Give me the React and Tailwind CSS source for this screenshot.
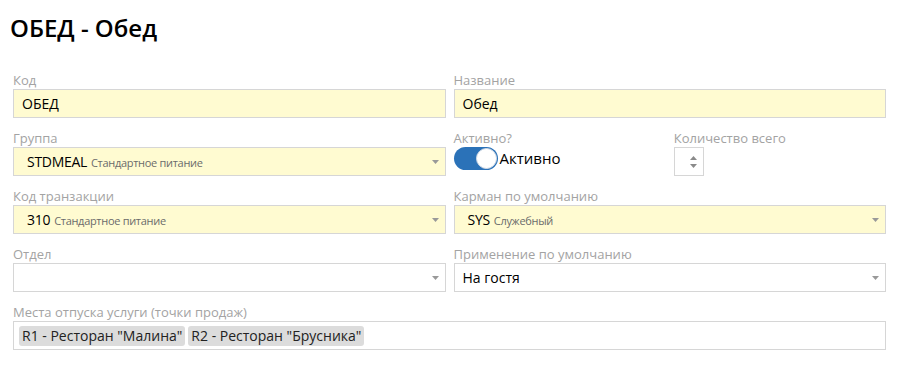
import React from "react";

const Caret = () => (
  <svg width="7" height="4" viewBox="0 0 7 4" className="shrink-0">
    <path d="M0 0 L7 0 L3.5 4 Z" fill="#999999" />
  </svg>
);

const Label = ({ children }) => (
  <div className="h-[18px] text-[13px] leading-[18px] text-[#a3a3a3] whitespace-nowrap">{children}</div>
);

const TextInput = ({ value, yellow }) => (
  <div
    className={`h-[29px] border border-[#d6d6d6] flex items-center px-[8px] text-[14px] text-black ${
      yellow ? "bg-[#fffbd1]" : "bg-white"
    }`}
  >
    {value}
  </div>
);

const Select = ({ code, name, plain, yellow }) => (
  <div
    className={`h-[29px] border border-[#d6d6d6] flex items-center justify-between pr-[6px] ${
      yellow ? "bg-[#fffbd1]" : "bg-white"
    } ${code ? "pl-[13px]" : "pl-[8px]"}`}
  >
    <div className="flex items-baseline gap-[4px] whitespace-nowrap">
      {code && <span className="text-[14px] tracking-[-0.3px] text-black">{code}</span>}
      {name && <span className="text-[11px] text-[#6b6b6b] tracking-[-0.3px]">{name}</span>}
      {plain && <span className="text-[14px] text-black">{plain}</span>}
    </div>
    <Caret />
  </div>
);

const Field = ({ label, children }) => (
  <div className="flex flex-col">
    <Label>{label}</Label>
    {children}
  </div>
);

const Tag = ({ children }) => (
  <span className="h-[20px] px-[3px] rounded-[3px] bg-[#dcdcdc] text-[14px] leading-[20px] text-[#222] whitespace-nowrap">
    {children}
  </span>
);

export default function App() {
  return (
    <div
      className="w-[902px] h-[365px] bg-white overflow-hidden"
      style={{ fontFamily: '"Open Sans", "Noto Sans", sans-serif' }}
    >
      <h1 className="pl-[10px] pt-[12px] h-[71px] text-[24px] leading-[32px] font-semibold text-black">
        ОБЕД - Обед
      </h1>

      <div className="pl-[13px] pr-[16px] flex flex-col gap-[11px]">
        <div className="grid grid-cols-2 gap-x-[8px]">
          <Field label="Код">
            <TextInput value="ОБЕД" yellow />
          </Field>
          <Field label="Название">
            <TextInput value="Обед" yellow />
          </Field>
        </div>

        <div className="grid grid-cols-2 gap-x-[8px]">
          <Field label="Группа">
            <Select code="STDMEAL" name="Стандартное питание" yellow />
          </Field>
          <div className="grid grid-cols-2 gap-x-[8px]">
            <Field label="Активно?">
              <div className="h-[29px] flex items-start gap-[2px]">
                <div className="w-[44px] h-[23px] rounded-full bg-[#2b72b8] flex items-center justify-end pr-[1px]">
                  <div className="w-[21px] h-[21px] rounded-full bg-white border border-[#d3dbe6]" />
                </div>
                <span className="text-[15px] leading-[23px] text-black">Активно</span>
              </div>
            </Field>
            <Field label="Количество всего">
              <div className="w-[30px] h-[29px] border border-[#d6d6d6] bg-white flex flex-col items-end justify-center gap-[4px] pr-[6px]">
                <svg width="7" height="4" viewBox="0 0 7 4">
                  <path d="M0 4 L7 4 L3.5 0 Z" fill="#8a8a8a" />
                </svg>
                <svg width="7" height="4" viewBox="0 0 7 4">
                  <path d="M0 0 L7 0 L3.5 4 Z" fill="#8a8a8a" />
                </svg>
              </div>
            </Field>
          </div>
        </div>

        <div className="grid grid-cols-2 gap-x-[8px]">
          <Field label="Код транзакции">
            <Select code="310" name="Стандартное питание" yellow />
          </Field>
          <Field label="Карман по умолчанию">
            <Select code="SYS" name="Служебный" yellow />
          </Field>
        </div>

        <div className="grid grid-cols-2 gap-x-[8px]">
          <Field label="Отдел">
            <Select />
          </Field>
          <Field label="Применение по умолчанию">
            <Select plain="На гостя" />
          </Field>
        </div>

        <Field label="Места отпуска услуги (точки продаж)">
          <div className="h-[29px] border border-[#d6d6d6] bg-white flex items-center gap-[3px] pl-[5px]">
            <Tag>R1 - Ресторан "Малина"</Tag>
            <Tag>R2 - Ресторан "Брусника"</Tag>
          </div>
        </Field>
      </div>
    </div>
  );
}
